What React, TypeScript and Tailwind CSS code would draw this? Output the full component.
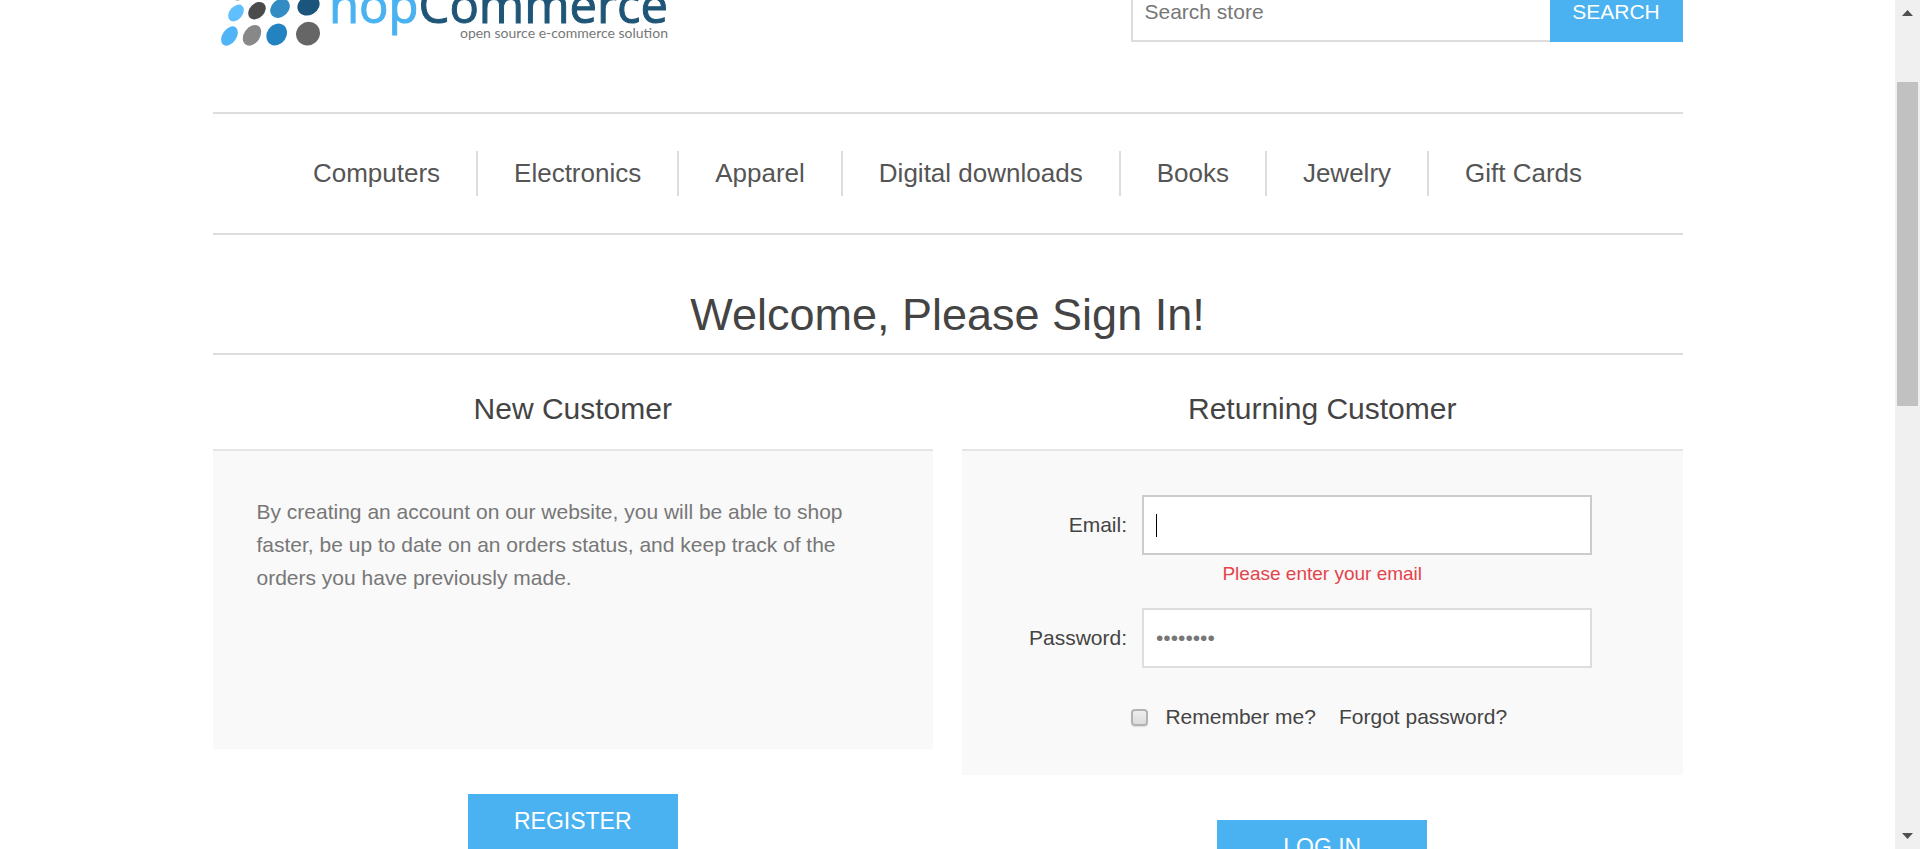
import { useState } from "react";

const categories = [
  "Computers",
  "Electronics",
  "Apparel",
  "Digital downloads",
  "Books",
  "Jewelry",
  "Gift Cards",
];

const dots = [
  { cx: 26, cy: -7, rx: 6, ry: 8, tilt: 30, fill: "#8b8b8b" },
  { cx: 23, cy: 13, rx: 6.5, ry: 9.5, tilt: 40, fill: "#5fc0fd" },
  { cx: 44, cy: 10.7, rx: 7.3, ry: 10, tilt: 45, fill: "#4b4b4b" },
  { cx: 67, cy: 8.3, rx: 8.5, ry: 10.8, tilt: 48, fill: "#348cc4" },
  { cx: 95.5, cy: 5.5, rx: 9.5, ry: 11.6, tilt: 60, fill: "#1c557c" },
  { cx: 16.5, cy: 36, rx: 7, ry: 10.7, tilt: 35, fill: "#50b5f7" },
  { cx: 39, cy: 35.3, rx: 8, ry: 11.3, tilt: 35, fill: "#888888" },
  { cx: 63.7, cy: 34.5, rx: 9.7, ry: 11.5, tilt: 35, fill: "#2383c1" },
  { cx: 95, cy: 33.7, rx: 11.5, ry: 12.3, tilt: 50, fill: "#666666" },
];

function Logo() {
  return (
    <svg
      viewBox="0 -18 460 66"
      width="460"
      height="66"
      role="img"
      aria-label="nopCommerce, open source e-commerce solution"
    >
      {dots.map((d) => (
        <ellipse
          key={`${d.cx}-${d.cy}`}
          cx={d.cx}
          cy={d.cy}
          rx={d.rx}
          ry={d.ry}
          fill={d.fill}
          transform={`rotate(${d.tilt} ${d.cx} ${d.cy})`}
        />
      ))}
      <text
        x="116"
        y="23"
        fontSize="49"
        fontFamily="Open Sans, sans-serif"
        fill="#4ab2f1"
        stroke="#4ab2f1"
        strokeWidth="1"
      >
        nop
        <tspan fill="#1f5577" stroke="#1f5577">
          Commerce
        </tspan>
      </text>
      <text x="455" y="38" textAnchor="end" fontSize="14" fontFamily="Lato, sans-serif" fill="#777">
        open source e-commerce solution
      </text>
    </svg>
  );
}

function Header() {
  return (
    <header className="-mt-[18px] flex items-start justify-between border-b-2 border-[#ddd] pb-16">
      <a href="#home">
        <Logo />
      </a>
      <form className="flex h-[60px]" onSubmit={(e) => e.preventDefault()}>
        <input
          type="text"
          aria-label="Search store"
          placeholder="Search store"
          className="w-[419px] border-2 border-r-0 border-[#ddd] px-3 text-[21px] outline-none placeholder:text-[#777]"
        />
        <button type="submit" className="w-[133px] bg-[#4ab2f1] text-[21px] text-white">
          SEARCH
        </button>
      </form>
    </header>
  );
}

function Nav() {
  return (
    <nav className="border-b-2 border-[#ddd] py-[37px]">
      <ul className="flex justify-center divide-x-2 divide-[#ddd]">
        {categories.map((name) => (
          <li key={name} className="px-9">
            <a href="#category" className="block text-[26px] leading-[45px] text-[#555]">
              {name}
            </a>
          </li>
        ))}
      </ul>
    </nav>
  );
}

function PanelTitle({ children }: { children: string }) {
  return <h2 className="pt-9 pb-[22px] text-center text-[30px] leading-9">{children}</h2>;
}

function NewCustomer() {
  return (
    <section className="flex-1">
      <PanelTitle>New Customer</PanelTitle>
      <div className="min-h-[300px] border-t-2 border-[#e5e5e5] bg-[#f9f9f9] p-11 text-[21px] leading-[33px] text-[#777]">
        By creating an account on our website, you will be able to shop faster, be up to date on an
        orders status, and keep track of the orders you have previously made.
      </div>
      <div className="mt-[45px] text-center">
        <button type="button" className="h-[55px] w-[210px] bg-[#4ab2f1] text-[23px] text-white">
          REGISTER
        </button>
      </div>
    </section>
  );
}

function ReturningCustomer() {
  const [email, setEmail] = useState("");
  return (
    <section className="flex-1">
      <PanelTitle>Returning Customer</PanelTitle>
      <form onSubmit={(e) => e.preventDefault()}>
        <div className="border-t-2 border-[#e5e5e5] bg-[#f9f9f9] pt-11 pb-[42px] text-[21px]">
          <div className="flex items-center">
            <label htmlFor="email" className="w-[180px] pr-[15px] text-right">
              Email:
            </label>
            <div className="relative">
              <input
                id="email"
                type="email"
                value={email}
                onChange={(e) => setEmail(e.target.value)}
                className="block h-[60px] w-[450px] border-2 border-[#ccc] bg-white px-3 outline-none"
              />
              {email === "" && (
                <span className="pointer-events-none absolute top-[19px] left-[14px] h-[23px] w-px bg-black" />
              )}
            </div>
          </div>
          <p className="mb-[19px] pt-1 text-center text-[19px] leading-[30px] text-[#e4434b]">
            Please enter your email
          </p>
          <div className="flex items-center">
            <label htmlFor="password" className="w-[180px] pr-[15px] text-right">
              Password:
            </label>
            <input
              id="password"
              type="password"
              defaultValue="customer"
              className="block h-[60px] w-[450px] border-2 border-[#ddd] bg-white px-3 text-[#777] outline-none"
            />
          </div>
          <div className="mt-[34px] mb-px flex items-center justify-center pr-1.5 leading-[30px]">
            <input
              id="remember"
              type="checkbox"
              className="size-[17px] appearance-none rounded-[4px] border-2 border-[#b3b3b3] bg-linear-to-b from-[#eee] to-[#dcdcdc] shadow-[0_1px_1px_#ddd] checked:from-[#777] checked:to-[#555]"
            />
            <label htmlFor="remember" className="pl-[17px]">
              Remember me?
            </label>
            <a href="#forgot" className="pl-[23px]">
              Forgot password?
            </a>
          </div>
        </div>
        <div className="mt-[45px] text-center">
          <button type="submit" className="h-[55px] w-[210px] bg-[#4ab2f1] text-[23px] text-white">
            LOG IN
          </button>
        </div>
      </form>
    </section>
  );
}

function ScrollTrack() {
  return (
    <div aria-hidden="true" className="flex w-[25px] shrink-0 flex-col items-center bg-[#f0f0f0] py-[10px]">
      <svg width="11" height="6" viewBox="0 0 11 6" fill="#505050">
        <path d="M0 6 5.500 0 11 6z" />
      </svg>
      <div className="mt-[66px] h-[324px] w-[21px] bg-[#c1c1c1]" />
      <svg width="11" height="6" viewBox="0 0 11 6" fill="#505050" className="mt-auto">
        <path d="M0 0h11L5.500 6z" />
      </svg>
    </div>
  );
}

export default function App() {
  return (
    <div className="flex h-screen overflow-hidden bg-white font-['Liberation_Sans',Arial,sans-serif] text-[#444]">
      <div className="min-w-0 flex-1">
        <div className="mx-auto w-full max-w-[1470px]">
          <Header />
          <Nav />
          <main>
            <h1 className="border-b-2 border-[#ddd] pt-[53px] pb-[11px] text-center text-[45px] leading-[54px]">
              Welcome, Please Sign In!
            </h1>
            <div className="flex gap-[29px]">
              <NewCustomer />
              <ReturningCustomer />
            </div>
          </main>
        </div>
      </div>
      <ScrollTrack />
    </div>
  );
}
